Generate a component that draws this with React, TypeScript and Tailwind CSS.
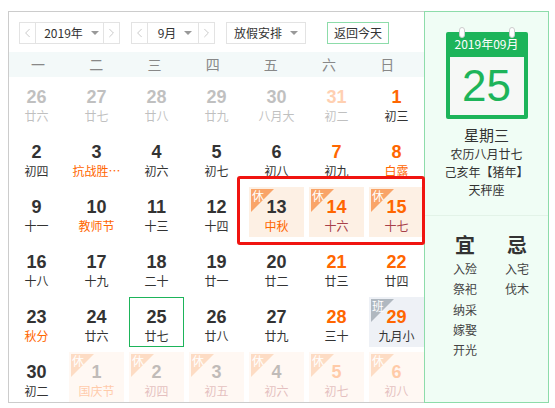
import { ChevronLeft, ChevronRight } from 'lucide-react';

type Day = {
  n: number;
  sub: string;
  weekend?: boolean;
  fest?: boolean;
  faded?: boolean;
  tag?: '休' | '班';
  today?: boolean;
};

const WEEK = ['一', '二', '三', '四', '五', '六', '日'];

const DAYS: Day[] = [
  { n: 26, sub: '廿六', faded: true },
  { n: 27, sub: '廿七', faded: true },
  { n: 28, sub: '廿八', faded: true },
  { n: 29, sub: '廿九', faded: true },
  { n: 30, sub: '八月大', faded: true },
  { n: 31, sub: '初二', faded: true, weekend: true },
  { n: 1, sub: '初三', weekend: true },
  { n: 2, sub: '初四' },
  { n: 3, sub: '抗战胜…', fest: true },
  { n: 4, sub: '初六' },
  { n: 5, sub: '初七' },
  { n: 6, sub: '初八' },
  { n: 7, sub: '初九', weekend: true },
  { n: 8, sub: '白露', weekend: true, fest: true },
  { n: 9, sub: '十一' },
  { n: 10, sub: '教师节', fest: true },
  { n: 11, sub: '十三' },
  { n: 12, sub: '十四' },
  { n: 13, sub: '中秋', fest: true, tag: '休' },
  { n: 14, sub: '十六', weekend: true, tag: '休' },
  { n: 15, sub: '十七', weekend: true, tag: '休' },
  { n: 16, sub: '十八' },
  { n: 17, sub: '十九' },
  { n: 18, sub: '二十' },
  { n: 19, sub: '廿一' },
  { n: 20, sub: '廿二' },
  { n: 21, sub: '廿三', weekend: true },
  { n: 22, sub: '廿四', weekend: true },
  { n: 23, sub: '秋分', fest: true },
  { n: 24, sub: '廿六' },
  { n: 25, sub: '廿七', today: true },
  { n: 26, sub: '廿八' },
  { n: 27, sub: '廿九' },
  { n: 28, sub: '三十', weekend: true },
  { n: 29, sub: '九月小', weekend: true, tag: '班' },
  { n: 30, sub: '初二' },
  { n: 1, sub: '国庆节', fest: true, faded: true, tag: '休' },
  { n: 2, sub: '初四', faded: true, tag: '休' },
  { n: 3, sub: '初五', faded: true, tag: '休' },
  { n: 4, sub: '初六', faded: true, tag: '休' },
  { n: 5, sub: '初七', faded: true, weekend: true, tag: '休' },
  { n: 6, sub: '初八', faded: true, weekend: true, tag: '休' },
];

function Caret() {
  return <span className="ml-[8px] w-0 h-0 border-x-[4px] border-x-transparent border-t-[4px] border-t-[#999]" />;
}

function Stepper({ label, width }: { label: string; width: string }) {
  return (
    <div className="flex h-[22px] border border-[#e3e3e3] bg-white">
      <div className="w-[16px] flex items-center justify-center border-r border-[#e3e3e3]">
        <ChevronLeft className="w-4 h-4 text-[#aaa]" strokeWidth={1} />
      </div>
      <div className={`${width} pl-[4px] flex items-center justify-center text-[12px] text-[#333]`}>
        {label}
        <Caret />
      </div>
      <div className="w-[16px] flex items-center justify-center border-l border-[#e3e3e3]">
        <ChevronRight className="w-4 h-4 text-[#aaa]" strokeWidth={1} />
      </div>
    </div>
  );
}

function DayCell({ d }: { d: Day }) {
  let bg = '';
  if (d.tag === '休') bg = d.faded ? 'bg-[#fff8f3]' : 'bg-[#fdf0e4]';
  if (d.tag === '班') bg = 'bg-[#eef1f6]';

  let triangle = 'bg-[#b0b8c0]';
  if (d.tag === '休') triangle = d.faded ? 'bg-[#fddcc4]' : 'bg-[#f9a468]';

  const numColor = d.weekend ? 'text-[#ff6600]' : 'text-[#333]';
  let subColor = 'text-[#333]';
  if (d.tag === '休') subColor = 'text-[#a8404a]';
  if (d.fest) subColor = 'text-[#ff6600]';

  return (
    <div className={`relative h-[50px] flex flex-col items-center pt-[10px] ${bg} ${d.today ? 'border border-[#1db45a]' : ''}`}>
      <div className={`relative flex flex-col items-center ${d.today ? '-mt-px' : ''} ${d.faded ? 'opacity-30' : ''}`}>
        <span className={`font-['Liberation_Sans'] font-bold text-[18px] leading-[20px] ${numColor}`}>{d.n}</span>
        <span className={`text-[12px] leading-[18px] whitespace-nowrap ${subColor}`}>{d.sub}</span>
      </div>
      {d.tag && (
        <>
          <div className={`absolute left-[2px] top-[2px] w-[23px] h-[23px] [clip-path:polygon(0_0,100%_0,0_100%)] ${triangle}`} />
          <span className="absolute left-[3px] top-[1px] text-[12px] leading-[16px] text-white">{d.tag}</span>
        </>
      )}
    </div>
  );
}

function Almanac({ title, items }: { title: string; items: string[] }) {
  return (
    <div className="flex flex-col items-center w-[36px]">
      <div className="font-bold text-[20px] leading-[28px] text-[#333]">{title}</div>
      {items.map((t) => (
        <div key={t} className="text-[12px] leading-[20.25px] text-[#444]">{t}</div>
      ))}
    </div>
  );
}

export default function App() {
  return (
    <div className="w-[555px] h-[408px] bg-white pt-[11px] pl-[8px] font-['Noto_Sans_CJK_SC','Liberation_Sans',sans-serif] overflow-hidden">
      <div className="relative flex w-[541px] h-[392px]">
        <div className="w-[416px] h-full border-l border-y border-[#ccc]">
          <div className="flex items-center h-[40px] pl-[10px] pt-px">
            <Stepper label="2019年" width="w-[67px]" />
            <div className="w-[11px]" />
            <Stepper label="9月" width="w-[50px]" />
            <div className="w-[11px]" />
            <div className="w-[80px] h-[22px] flex items-center justify-center border border-[#e3e3e3] text-[12px] text-[#333]">
              放假安排
              <Caret />
            </div>
            <div className="ml-[21px] w-[62px] h-[22px] flex items-center justify-center border border-[#8ddcaa] text-[12px] text-[#333]">
              返回今天
            </div>
          </div>
          <div className="grid grid-cols-[repeat(7,58.2px)] h-[25px] bg-[#f3f9f9] items-center text-[14px] text-[#888]">
            {WEEK.map((w) => (
              <div key={w} className="text-center">{w}</div>
            ))}
          </div>
          <div className="grid grid-cols-[repeat(7,55px)] gap-[5px]">
            {DAYS.map((d, i) => (
              <DayCell key={i} d={d} />
            ))}
          </div>
        </div>
        <div className="w-[125px] h-full border border-[#8ddcaa] bg-[#f0fdf5] flex flex-col items-center">
          <div className="relative mt-[20px] w-[82px] h-[87px] bg-[#1db45a] rounded-[2px] flex flex-col items-center px-[4px] pb-[4px]">
            <span className="absolute left-[13px] -top-[5px] w-[6px] h-[11px] rounded-full bg-white border border-[#ccc]" />
            <span className="absolute right-[13px] -top-[5px] w-[6px] h-[11px] rounded-full bg-white border border-[#ccc]" />
            <div className="h-[25px] pt-[2px] text-[12px] leading-[20px] text-white whitespace-nowrap">2019年09月</div>
            <div className="flex-1 w-full bg-[#f6f8f6] flex items-center justify-center font-['Liberation_Sans'] text-[44px] leading-none text-[#1db45a]">
              25
            </div>
          </div>
          <div className="mt-[6px] text-[15px] leading-[20px] text-[#333]">星期三</div>
          <div className="text-[12px] leading-[18px] text-[#333]">农历八月廿七</div>
          <div className="text-[12px] leading-[18px] text-[#333]">己亥年【猪年】</div>
          <div className="text-[12px] leading-[18px] text-[#333]">天秤座</div>
          <div className="w-full mt-[16px] border-t border-[#e3f3e8]" />
          <div className="mt-[15px] w-full flex justify-between pl-[22px] pr-[13px]">
            <Almanac title="宜" items={['入殓', '祭祀', '纳采', '嫁娶', '开光']} />
            <Almanac title="忌" items={['入宅', '伐木']} />
          </div>
        </div>
        <div className="absolute left-[229px] top-[165px] w-[188px] h-[69px] border-[3px] border-[#f01410] rounded-[3px] pointer-events-none" />
      </div>
    </div>
  );
}
